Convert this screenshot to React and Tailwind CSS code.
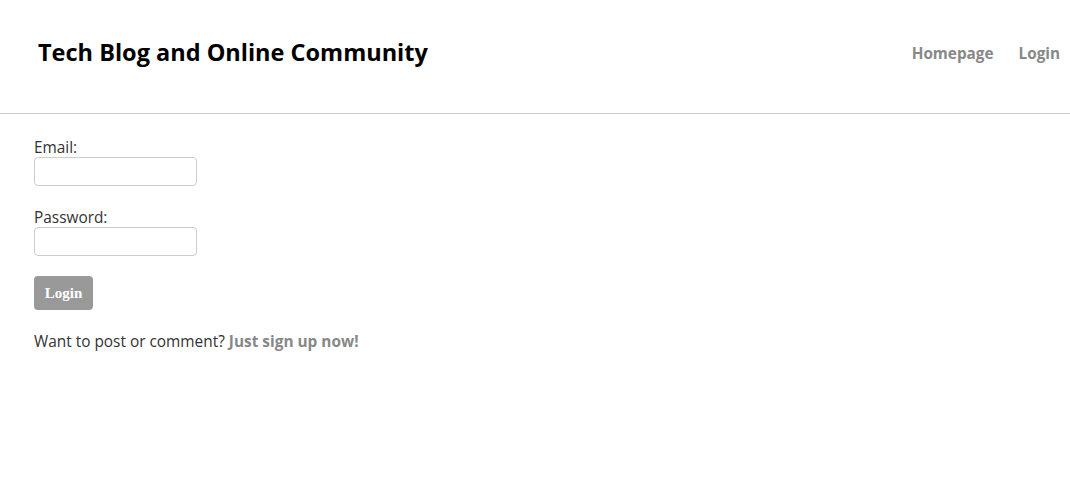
import React from "react";

export default function App() {
  return (
    <div className="min-h-screen bg-white font-['Segoe_UI','Open_Sans',sans-serif] text-[#333]">
      {/* Header */}
      <header className="flex items-center justify-between h-[114px] border-b border-[#ccc] pl-[38px] pr-[10px] pb-[7px]">
        <h1 className="text-[23.5px] font-bold text-black">Tech Blog and Online Community</h1>
        <nav className="flex gap-[25px] text-[15.3px] font-bold text-[#888]">
          <a href="#">Homepage</a>
          <a href="#">Login</a>
        </nav>
      </header>

      {/* Login form */}
      <form className="px-[34px] pt-[25px]">
        <div className="flex flex-col">
          <label className="text-[15.4px] leading-[18px]">Email:</label>
          <input type="email" className="w-[163px] h-[29px] border border-[#ccc] rounded-[4px]" />
        </div>
        <div className="flex flex-col mt-[23px]">
          <label className="text-[15.4px] leading-[18px]">Password:</label>
          <input type="password" className="w-[163px] h-[29px] border border-[#ccc] rounded-[4px]" />
        </div>
        <button
          type="button"
          className="mt-[20px] w-[59px] h-[34px] rounded-[4px] bg-[#999] text-white font-bold text-[15px] font-['Liberation_Serif',serif]"
        >
          Login
        </button>
        <p className="mt-[20px] text-[15.4px]">
          Want to post or comment?{" "}
          <a href="#" className="font-bold text-[#888]">Just sign up now!</a>
        </p>
      </form>
    </div>
  );
}
